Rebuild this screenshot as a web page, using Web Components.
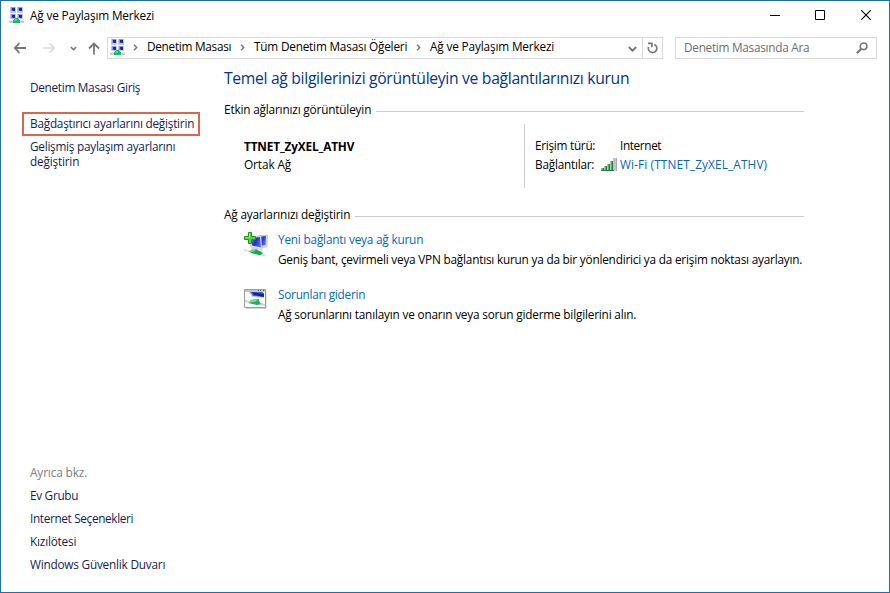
<!DOCTYPE html>
<html lang="tr">
<head>
<meta charset="utf-8">
<title>Ağ ve Paylaşım Merkezi</title>
<style>
    body {
        margin: 0;
        width: 890px;
        height: 593px;
        overflow: hidden;
        background: #fff;
        font: 11.8px/16px "Open Sans", "Noto Sans", sans-serif;
        color: #000;
    }
</style>
</head>
<body>
<network-window>
    <title-bar slot="title"><fit-text width="124">Ağ ve Paylaşım Merkezi</fit-text></title-bar>
    <address-bar slot="address">
        <bread-crumb><fit-text width="84">Denetim Masası</fit-text></bread-crumb>
        <bread-crumb><fit-text width="153">Tüm Denetim Masası Öğeleri</fit-text></bread-crumb>
        <bread-crumb><fit-text width="124">Ağ ve Paylaşım Merkezi</fit-text></bread-crumb>
        <fit-text slot="search" width="125">Denetim Masasında Ara</fit-text>
    </address-bar>
    <side-bar slot="side">
        <fit-text width="110">Denetim Masası Giriş</fit-text>
        <fit-text slot="marked" width="164">Bağdaştırıcı ayarlarını değiştirin</fit-text>
        <fit-text slot="advanced" width="145">Gelişmiş paylaşım ayarlarını</fit-text>
        <fit-text slot="advanced" width="49">değiştirin</fit-text>
        <fit-text slot="caption" width="57">Ayrıca bkz.</fit-text>
        <fit-text slot="related" width="48">Ev Grubu</fit-text>
        <fit-text slot="related" width="103">Internet Seçenekleri</fit-text>
        <fit-text slot="related" width="46">Kızılötesi</fit-text>
        <fit-text slot="related" width="135">Windows Güvenlik Duvarı</fit-text>
    </side-bar>
    <main-panel>
        <fit-text slot="heading" width="405">Temel ağ bilgilerinizi görüntüleyin ve bağlantılarınızı kurun</fit-text>
        <panel-section>
            <fit-text slot="label" width="147">Etkin ağlarınızı görüntüleyin</fit-text>
            <active-network>
                <fit-text slot="name" width="110">TTNET_ZyXEL_ATHV</fit-text>
                <fit-text slot="kind" width="47">Ortak Ağ</fit-text>
                <fit-text slot="access-label" width="60">Erişim türü:</fit-text>
                <fit-text slot="access" width="41">Internet</fit-text>
                <fit-text slot="links-label" width="59">Bağlantılar:</fit-text>
                <fit-text slot="link" width="147">Wi-Fi (TTNET_ZyXEL_ATHV)</fit-text>
            </active-network>
        </panel-section>
        <panel-section>
            <fit-text slot="label" width="126">Ağ ayarlarınızı değiştirin</fit-text>
            <task-item>
                <ui-icon slot="icon" name="connect"></ui-icon>
                <fit-text slot="link" width="145">Yeni bağlantı veya ağ kurun</fit-text>
                <fit-text width="524">Geniş bant, çevirmeli veya VPN bağlantısı kurun ya da bir yönlendirici ya da erişim noktası ayarlayın.</fit-text>
            </task-item>
            <task-item>
                <ui-icon slot="icon" name="troubleshoot"></ui-icon>
                <fit-text slot="link" width="87">Sorunları giderin</fit-text>
                <fit-text width="358">Ağ sorunlarını tanılayın ve onarın veya sorun giderme bilgilerini alın.</fit-text>
            </task-item>
        </panel-section>
    </main-panel>
</network-window>

<script>
const icons = {
    network: `<svg width="16" height="16" viewBox="0 0 16 16" shape-rendering="crispEdges">
        <path fill="#c6c9d4" d="M1 0h6v6H1zM8 0h6v6H8zM1 7h6v5H1zM8 7h6v5H8z"/>
        <path fill="#8797e8" d="M2 0h4v4H2zM9 0h4v4H9zM2 7h4v4H2zM9 7h4v4H9z"/>
        <path fill="#1622b8" d="M3 1h3v3H3zM10 1h3v3h-3zM3 8h3v3H3zM10 8h3v3h-3z"/>
        <path fill="#4659d2" d="M3 3h1v1H3zM10 3h1v1h-1zM3 10h1v1H3zM10 10h1v1h-1z"/>
        <path fill="#c8cbcc" d="M0 13h15v3H0z"/><path fill="#e1e3e4" d="M0 13h15v1H0z"/>
        <path fill="#12bc67" d="M6 11h3v1h1v1h1v3H4v-3h1v-1h1z"/>
        <path fill="#42dd91" d="M6 12h2v2H5v-1h1z"/></svg>`,
    back: `<svg width="14" height="12" viewBox="0 0 14 12"><path fill="none" stroke="#777" stroke-width="1.8" d="M13 6H2M6.5 1.2 1.8 6l4.7 4.8"/></svg>`,
    forward: `<svg width="14" height="12" viewBox="0 0 14 12"><path fill="none" stroke="#dadada" stroke-width="1.6" d="M1 6h11M7.5 1.2 12.2 6l-4.7 4.8"/></svg>`,
    recent: `<svg width="7" height="5" viewBox="0 0 7 5"><path fill="none" stroke="#777" stroke-width="1.5" d="m.8 1 2.7 2.6L6.2 1"/></svg>`,
    up: `<svg width="12" height="13" viewBox="0 0 12 13"><path fill="none" stroke="#777" stroke-width="1.8" d="M6 12.5V2M1 6.5l5-5 5 5"/></svg>`,
    chevron: `<svg width="5" height="7" viewBox="0 0 5 7"><path fill="none" stroke="#777" stroke-width="1.4" d="m1 .8 2.7 2.7L1 6.2"/></svg>`,
    down: `<svg width="9" height="6" viewBox="0 0 9 6"><path fill="none" stroke="#777" stroke-width="2" d="m.8 1 3.7 3.6L8.2 1"/></svg>`,
    refresh: `<svg width="11" height="12" viewBox="0 0 11 12"><path fill="none" stroke="#777" stroke-width="1.7" d="M7.3 2.5A4.2 4.2 0 1 1 1.6 5M1 1.3h3.9v3.9"/></svg>`,
    search: `<svg width="12" height="12" viewBox="0 0 12 12"><circle cx="7.6" cy="4.3" r="3.3" fill="none" stroke="#777" stroke-width="1.6"/><path stroke="#777" stroke-width="2" d="M5.3 6.7.8 11.2"/></svg>`,
    minimize: `<svg width="10" height="10" viewBox="0 0 10 10"><path fill="#000" d="M0 5h10v1H0z"/></svg>`,
    maximize: `<svg width="10" height="10" viewBox="0 0 10 10"><path fill="none" stroke="#000" d="M.5.5h9v9h-9z"/></svg>`,
    close: `<svg width="10" height="10" viewBox="0 0 10 10"><path stroke="#000" stroke-width="1.1" d="m.2.2 9.6 9.6m0-9.6L.2 9.8"/></svg>`,
    signal: `<svg width="16" height="13" viewBox="0 0 16 13">
        <path fill="#c4c4c4" d="M12 0h4v13h-4z"/><path fill="#aaa" d="M15 0h1v13h-1z"/>
        <path fill="#237b45" d="M0 10h3v3H0zM3 8h3v5H3zM6 6h3v7H6zM9 3h4v10H9z"/>
        <path fill="#a4cfac" d="M0 10h1v2H0zM3 8h1v4H3zM6 6h1v6H6zM9 3h1v9H9zM12 3h1v9h-1z"/>
        <path fill="#5da970" d="M1 10h1v2H1zM4 8h1v4H4zM7 6h1v6H7zM10 3h1v9h-1z"/></svg>`,
    connect: `<svg width="26" height="26" viewBox="0 0 26 26">
        <defs>
            <linearGradient id="screen" x2="1" y2=".5"><stop stop-color="#8798ea"/><stop offset=".5" stop-color="#2031c2"/><stop offset="1" stop-color="#5a69d4"/></linearGradient>
        </defs>
        <path fill="#d1d5df" stroke="#aeb4c2" stroke-width=".6" d="m13 4 10.5-1-.5 12-8 1z"/>
        <path fill="url(#screen)" d="m14 5 8-1-.5 9-6.500 1z"/>
        <path fill="#e6e9ef" stroke="#aab1c4" stroke-width=".6" d="m4 5 13-1 1 14-11-3z"/>
        <path fill="url(#screen)" d="m7 6 9-1 1 10.500-9-2z"/>
        <path fill="#bfc5cb" d="m8 16 6 1-1 2-6-1z"/>
        <path fill="#d5d9dc" d="m0 17 21 5.500v1.900L0 18.500z"/>
        <path fill="#17aa4c" d="m5 19 7-1.600 5 2 2 1.800-3 2-9-2.200z"/><path fill="#61d98e" d="m5 19 7-1.200-2 2-4 .4z"/>
        <path fill="#5bd33f" stroke="#26931c" stroke-width="1" d="M4.500.5h3v4h4v3h-4v4h-3v-4h-4v-3h4z"/>
        <path fill="#a2ef89" d="M5 1h1v4.500H1V5h4z"/></svg>`,
    troubleshoot: `<svg width="24" height="20" viewBox="0 0 24 20">
        <path fill="#d2d2d2" d="M2 2h20.500v18H2z"/>
        <path fill="#fafbfc" stroke="#959da6" d="M.5.5h21v18H.5z"/>
        <path fill="#bdc5cd" d="M1 1h20v2H1z"/><path fill="#5e6870" d="M14 1h1v1h-1zm2 0h1v1h-1zm3 0h1v1h-1z"/>
        <path fill="#c9d0dd" d="m5 3 15 1v5L8 8z"/>
        <path fill="#4d63cd" d="M6 3h12l2 1v4L9 7z"/><path fill="#1321a5" d="m8 3 12 2v3L10 6z"/>
        <path fill="#cdd2d6" d="m1 11 20 4v2L1 13z"/>
        <path fill="#23b45b" d="m6 11 9-1v2l2 3-4 1-9-2 3-1z"/><path fill="#70da97" d="m6 11 8-.6-3 2.500-5 .4z"/></svg>`,
}

// Creates the shadow root shared by every element on the page.
class BaseElement extends HTMLElement {
    constructor() {
        super()
        this.shadow = this.attachShadow({ mode: 'open' })
        const template = document.createElement('template')
        template.innerHTML = this.constructor.markup
        this.shadow.appendChild(template.content.cloneNode(true))
    }
}

class UiIcon extends BaseElement {
    static markup = `<style>:host { display: block; flex: none } svg { display: block }</style>`

    connectedCallback() {
        this.shadow.innerHTML += icons[this.getAttribute('name')]
    }
}

// A single line of text, tracked so that it fills the given width.
class FitText extends BaseElement {
    static markup = `
    <style>
        :host { display: block; flex: none; white-space: nowrap }
        span { display: inline-block }
    </style>
    <span><slot></slot></span>`

    connectedCallback() {
        const width = Number(this.getAttribute('width'))
        const span = this.shadow.querySelector('span')
        const natural = span.getBoundingClientRect().width
        this.style.width = width + 'px'
        span.style.letterSpacing = (width + 0.2 - natural) / this.textContent.length + 'px'
    }
}

class NetworkWindow extends BaseElement {
    static markup = `
    <style>
        :host {
            box-sizing: border-box;
            display: grid;
            grid-template: 30px 36px 1fr / 223px 1fr;
            width: 890px;
            height: 593px;
            border: 1px solid #1a70b5;
        }
        [name=title], [name=address] { display: block; grid-column: 1 / 3 }
    </style>
    <slot name="title"></slot>
    <slot name="address"></slot>
    <slot name="side"></slot>
    <slot></slot>`
}

class TitleBar extends BaseElement {
    static markup = `
    <style>
        :host { display: flex; align-items: center; height: 28px; padding: 0 18px 0 8px }
        slot { display: block; margin-left: 5px }
        .buttons { display: flex; gap: 35px; margin-left: auto }
        [name=close] { margin-left: 1px }
    </style>
    <ui-icon name="network"></ui-icon>
    <slot></slot>
    <div class="buttons">
        <ui-icon name="minimize"></ui-icon>
        <ui-icon name="maximize"></ui-icon>
        <ui-icon name="close"></ui-icon>
    </div>`
}

class AddressBar extends BaseElement {
    static markup = `
    <style>
        :host { display: flex; align-items: center; height: 22px; margin: 6px 12px 0 12px }
        .nav { display: flex; align-items: center; width: 94px }
        .nav :nth-child(2) { margin-left: 15px }
        .nav :nth-child(3) { margin-left: 14px }
        .nav :nth-child(4) { margin-left: 11px }
        .box {
            box-sizing: border-box;
            display: flex;
            align-items: center;
            height: 22px;
            border: 1px solid #d9d9d9;
        }
        .path { width: 556px; padding-left: 2px }
        .path > [name=network] { margin-bottom: 2px }
        .path > [name=down] { margin: 2px 5px 0 auto }
        .crumbs { display: flex; margin: 0 0 4px -2px }
        .refresh {
            display: grid;
            place-items: center;
            width: 19px;
            height: 20px;
            border-left: 1px solid #d9d9d9;
        }
        .search { width: 202px; margin-left: 12px; padding: 0 8px; color: #6d6d6d }
        .search slot { display: block; margin-bottom: 2px }
        .search ui-icon { margin-left: auto }
    </style>
    <div class="nav">
        <ui-icon name="back"></ui-icon>
        <ui-icon name="forward"></ui-icon>
        <ui-icon name="recent"></ui-icon>
        <ui-icon name="up"></ui-icon>
    </div>
    <div class="box path">
        <ui-icon name="network"></ui-icon>
        <div class="crumbs"><slot></slot></div>
        <ui-icon name="down"></ui-icon>
        <div class="refresh"><ui-icon name="refresh"></ui-icon></div>
    </div>
    <div class="box search">
        <slot name="search"></slot>
        <ui-icon name="search"></ui-icon>
    </div>`
}

class BreadCrumb extends BaseElement {
    static markup = `
    <style>
        :host { display: flex; align-items: center; gap: 9px; margin-left: 9px }
        ui-icon { margin-top: 3px }
    </style>
    <ui-icon name="chevron"></ui-icon>
    <slot></slot>`
}

class SideBar extends BaseElement {
    static markup = `
    <style>
        :host {
            display: flex;
            flex-direction: column;
            padding: 12px 0 20px 29px;
            color: #151c55;
        }
        .marked {
            box-sizing: border-box;
            width: 178px;
            height: 24px;
            margin: 17px 0 3px -8px;
            padding: 1px 6px;
            border: 2px solid #d9674a;
        }
        .advanced { line-height: 15px }
        .related {
            display: flex;
            flex-direction: column;
            gap: 7px;
            margin-top: auto;
        }
        .caption { color: #7d7d7d }
    </style>
    <slot></slot>
    <div class="marked"><slot name="marked"></slot></div>
    <div class="advanced"><slot name="advanced"></slot></div>
    <div class="related">
        <div class="caption"><slot name="caption"></slot></div>
        <slot name="related"></slot>
    </div>`
}

class MainPanel extends BaseElement {
    static markup = `
    <style>
        :host { display: block; width: 580px }
        h1 {
            margin: -1px 0 11px;
            font-size: 15.7px;
            font-weight: normal;
            line-height: 24px;
            color: #003399;
        }
    </style>
    <h1><slot name="heading"></slot></h1>
    <slot></slot>`
}

class PanelSection extends BaseElement {
    static markup = `
    <style>
        :host { display: block }
        .label { display: flex; align-items: center; gap: 5px }
        .label::after { content: ""; flex: 1; height: 1px; margin-top: 5px; background: #ccc }
    </style>
    <div class="label"><slot name="label"></slot></div>
    <slot></slot>`
}

class ActiveNetwork extends BaseElement {
    static markup = `
    <style>
        :host { display: flex; height: 64px; margin: 7px 0 18px; padding-left: 20px }
        .network {
            box-sizing: border-box;
            width: 280px;
            padding-top: 14px;
        }
        .name { margin-bottom: 2px; font-weight: 700 }
        dl {
            display: grid;
            grid-template-columns: 66px 19px auto;
            grid-auto-rows: 16px;
            align-content: start;
            row-gap: 3px;
            margin: 0;
            padding: 13px 0 0 10px;
            border-left: 1px solid #ccc;
        }
        dt, dd { margin: 0 }
        .access { grid-column: 3 }
        .link { color: #0066cc }
        ui-icon { margin-top: 2px }
    </style>
    <div class="network">
        <div class="name"><slot name="name"></slot></div>
        <slot name="kind"></slot>
    </div>
    <dl>
        <dt><slot name="access-label"></slot></dt>
        <dd class="access"><slot name="access"></slot></dd>
        <dt><slot name="links-label"></slot></dt>
        <dd><ui-icon name="signal"></ui-icon></dd>
        <dd class="link"><slot name="link"></slot></dd>
    </dl>`
}

class TaskItem extends BaseElement {
    static markup = `
    <style>
        :host { display: grid; grid-template-columns: 34px 1fr; margin: 9px 0 19px 20px }
        ::slotted([name=connect]) { margin-top: 1px }
        ::slotted([name=troubleshoot]) { margin-top: 3px }
        .link { margin-bottom: 4px; color: #0066cc }
    </style>
    <slot name="icon"></slot>
    <div>
        <div class="link"><slot name="link"></slot></div>
        <slot></slot>
    </div>`
}

customElements.define('ui-icon', UiIcon)
customElements.define('network-window', NetworkWindow)
customElements.define('title-bar', TitleBar)
customElements.define('address-bar', AddressBar)
customElements.define('bread-crumb', BreadCrumb)
customElements.define('side-bar', SideBar)
customElements.define('main-panel', MainPanel)
customElements.define('panel-section', PanelSection)
customElements.define('active-network', ActiveNetwork)
customElements.define('task-item', TaskItem)
// Measured last, once the inherited fonts are in place.
customElements.define('fit-text', FitText)
</script>
</body>
</html>
